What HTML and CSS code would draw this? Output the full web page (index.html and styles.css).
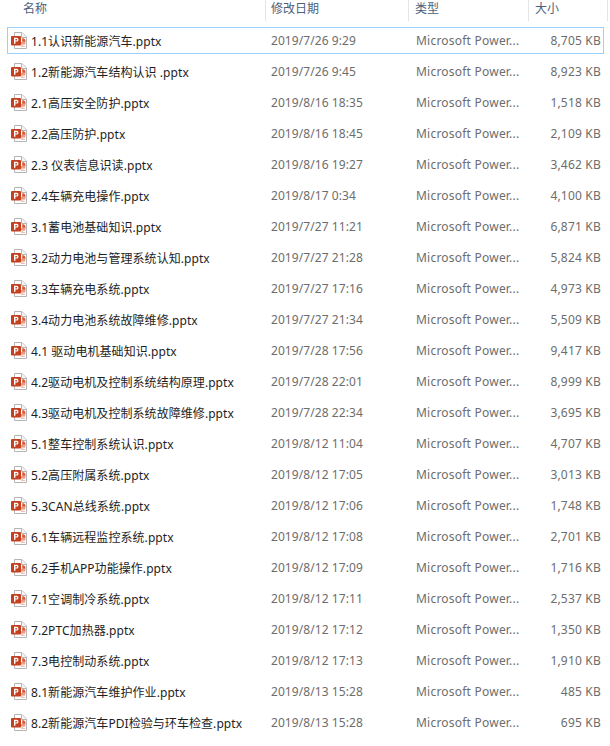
FILE: index.html
```html
<!DOCTYPE html>
<html lang="zh-CN">
  <head>
    <meta charset="UTF-8" />
    <title>文件列表</title>
    <link rel="stylesheet" href="styles.css">
  </head>

  <body>
    <svg class="icon-defs" width="0" height="0">
      <symbol id="ppt" viewBox="0 0 16 17">
        <path d="M3.5 .5H11L15.5 5V16.5H3.5Z" fill="#fff" stroke="#b4b4b4" />
        <path d="M10.5 .5V5.5H15.5" fill="#f4f4f4" stroke="#b4b4b4" />
        <path d="M11 6.5A3.5 3.5 0 1 1 7.5 10H11Z" fill="#eb9a82" />
        <path d="M11.5 6A3.5 3.5 0 0 1 14.5 9.5H11.5Z" fill="#d9583a" />
        <path d="M10 12H14V13H10ZM10 14H14V15H10Z" fill="#eec0b2" />
        <rect x="0" y="4" width="10" height="9.5" rx="1" fill="#c5401f" />
        <path d="M3 5.8H5.7Q7.5 5.8 7.5 7.7T5.7 9.6H4.4V11.8H3ZM4.4 6.9V8.5H5.4Q6.1 8.5 6.1 7.7T5.4 6.9Z" fill="#fff" />
      </symbol>
    </svg>

    <div class="header">
      <div class="head-cell head-name">名称</div>
      <div class="head-cell head-date">修改日期</div>
      <div class="head-cell head-type">类型</div>
      <div class="head-cell head-size">大小</div>
    </div>

    <div class="file-list">
      <div class="file-row selected">
        <div class="file-name"><svg class="file-icon"><use href="#ppt" /></svg>1.1认识新能源汽车.pptx</div>
        <div class="file-date">2019/7/26 9:29</div>
        <div class="file-type">Microsoft Power...</div>
        <div class="file-size">8,705 KB</div>
      </div>
      <div class="file-row">
        <div class="file-name"><svg class="file-icon"><use href="#ppt" /></svg>1.2新能源汽车结构认识 .pptx</div>
        <div class="file-date">2019/7/26 9:45</div>
        <div class="file-type">Microsoft Power...</div>
        <div class="file-size">8,923 KB</div>
      </div>
      <div class="file-row">
        <div class="file-name"><svg class="file-icon"><use href="#ppt" /></svg>2.1高压安全防护.pptx</div>
        <div class="file-date">2019/8/16 18:35</div>
        <div class="file-type">Microsoft Power...</div>
        <div class="file-size">1,518 KB</div>
      </div>
      <div class="file-row">
        <div class="file-name"><svg class="file-icon"><use href="#ppt" /></svg>2.2高压防护.pptx</div>
        <div class="file-date">2019/8/16 18:45</div>
        <div class="file-type">Microsoft Power...</div>
        <div class="file-size">2,109 KB</div>
      </div>
      <div class="file-row">
        <div class="file-name"><svg class="file-icon"><use href="#ppt" /></svg>2.3 仪表信息识读.pptx</div>
        <div class="file-date">2019/8/16 19:27</div>
        <div class="file-type">Microsoft Power...</div>
        <div class="file-size">3,462 KB</div>
      </div>
      <div class="file-row">
        <div class="file-name"><svg class="file-icon"><use href="#ppt" /></svg>2.4车辆充电操作.pptx</div>
        <div class="file-date">2019/8/17 0:34</div>
        <div class="file-type">Microsoft Power...</div>
        <div class="file-size">4,100 KB</div>
      </div>
      <div class="file-row">
        <div class="file-name"><svg class="file-icon"><use href="#ppt" /></svg>3.1蓄电池基础知识.pptx</div>
        <div class="file-date">2019/7/27 11:21</div>
        <div class="file-type">Microsoft Power...</div>
        <div class="file-size">6,871 KB</div>
      </div>
      <div class="file-row">
        <div class="file-name"><svg class="file-icon"><use href="#ppt" /></svg>3.2动力电池与管理系统认知.pptx</div>
        <div class="file-date">2019/7/27 21:28</div>
        <div class="file-type">Microsoft Power...</div>
        <div class="file-size">5,824 KB</div>
      </div>
      <div class="file-row">
        <div class="file-name"><svg class="file-icon"><use href="#ppt" /></svg>3.3车辆充电系统.pptx</div>
        <div class="file-date">2019/7/27 17:16</div>
        <div class="file-type">Microsoft Power...</div>
        <div class="file-size">4,973 KB</div>
      </div>
      <div class="file-row">
        <div class="file-name"><svg class="file-icon"><use href="#ppt" /></svg>3.4动力电池系统故障维修.pptx</div>
        <div class="file-date">2019/7/27 21:34</div>
        <div class="file-type">Microsoft Power...</div>
        <div class="file-size">5,509 KB</div>
      </div>
      <div class="file-row">
        <div class="file-name"><svg class="file-icon"><use href="#ppt" /></svg>4.1 驱动电机基础知识.pptx</div>
        <div class="file-date">2019/7/28 17:56</div>
        <div class="file-type">Microsoft Power...</div>
        <div class="file-size">9,417 KB</div>
      </div>
      <div class="file-row">
        <div class="file-name"><svg class="file-icon"><use href="#ppt" /></svg>4.2驱动电机及控制系统结构原理.pptx</div>
        <div class="file-date">2019/7/28 22:01</div>
        <div class="file-type">Microsoft Power...</div>
        <div class="file-size">8,999 KB</div>
      </div>
      <div class="file-row">
        <div class="file-name"><svg class="file-icon"><use href="#ppt" /></svg>4.3驱动电机及控制系统故障维修.pptx</div>
        <div class="file-date">2019/7/28 22:34</div>
        <div class="file-type">Microsoft Power...</div>
        <div class="file-size">3,695 KB</div>
      </div>
      <div class="file-row">
        <div class="file-name"><svg class="file-icon"><use href="#ppt" /></svg>5.1整车控制系统认识.pptx</div>
        <div class="file-date">2019/8/12 11:04</div>
        <div class="file-type">Microsoft Power...</div>
        <div class="file-size">4,707 KB</div>
      </div>
      <div class="file-row">
        <div class="file-name"><svg class="file-icon"><use href="#ppt" /></svg>5.2高压附属系统.pptx</div>
        <div class="file-date">2019/8/12 17:05</div>
        <div class="file-type">Microsoft Power...</div>
        <div class="file-size">3,013 KB</div>
      </div>
      <div class="file-row">
        <div class="file-name"><svg class="file-icon"><use href="#ppt" /></svg>5.3CAN总线系统.pptx</div>
        <div class="file-date">2019/8/12 17:06</div>
        <div class="file-type">Microsoft Power...</div>
        <div class="file-size">1,748 KB</div>
      </div>
      <div class="file-row">
        <div class="file-name"><svg class="file-icon"><use href="#ppt" /></svg>6.1车辆远程监控系统.pptx</div>
        <div class="file-date">2019/8/12 17:08</div>
        <div class="file-type">Microsoft Power...</div>
        <div class="file-size">2,701 KB</div>
      </div>
      <div class="file-row">
        <div class="file-name"><svg class="file-icon"><use href="#ppt" /></svg>6.2手机APP功能操作.pptx</div>
        <div class="file-date">2019/8/12 17:09</div>
        <div class="file-type">Microsoft Power...</div>
        <div class="file-size">1,716 KB</div>
      </div>
      <div class="file-row">
        <div class="file-name"><svg class="file-icon"><use href="#ppt" /></svg>7.1空调制冷系统.pptx</div>
        <div class="file-date">2019/8/12 17:11</div>
        <div class="file-type">Microsoft Power...</div>
        <div class="file-size">2,537 KB</div>
      </div>
      <div class="file-row">
        <div class="file-name"><svg class="file-icon"><use href="#ppt" /></svg>7.2PTC加热器.pptx</div>
        <div class="file-date">2019/8/12 17:12</div>
        <div class="file-type">Microsoft Power...</div>
        <div class="file-size">1,350 KB</div>
      </div>
      <div class="file-row">
        <div class="file-name"><svg class="file-icon"><use href="#ppt" /></svg>7.3电控制动系统.pptx</div>
        <div class="file-date">2019/8/12 17:13</div>
        <div class="file-type">Microsoft Power...</div>
        <div class="file-size">1,910 KB</div>
      </div>
      <div class="file-row">
        <div class="file-name"><svg class="file-icon"><use href="#ppt" /></svg>8.1新能源汽车维护作业.pptx</div>
        <div class="file-date">2019/8/13 15:28</div>
        <div class="file-type">Microsoft Power...</div>
        <div class="file-size">485 KB</div>
      </div>
      <div class="file-row">
        <div class="file-name"><svg class="file-icon"><use href="#ppt" /></svg>8.2新能源汽车PDI检验与环车检查.pptx</div>
        <div class="file-date">2019/8/13 15:28</div>
        <div class="file-type">Microsoft Power...</div>
        <div class="file-size">695 KB</div>
      </div>
    </div>
  </body>
</html>
```

FILE: styles.css
```css
body {
  margin: 0;
  background-color: #fff;
  font-family: "Noto Sans", "Noto Sans CJK SC", sans-serif;
  font-size: 12px;
  overflow: hidden;
}

.icon-defs {
  display: block;
  height: 0;
}

.header {
  display: flex;
  height: 21px;
  color: #4c607a;
}

.head-cell {
  box-sizing: border-box;
  padding-top: 1px;
  line-height: 15px;
  border-right: 1px solid #e5e5e5;
}

.head-name {
  width: 266px;
  padding-left: 23px;
}

.head-date {
  width: 143px;
  padding-left: 5px;
}

.head-type {
  width: 120px;
  padding-left: 6px;
}

.head-size {
  width: 79px;
  padding-left: 6px;
}

.file-list {
  display: flex;
  flex-direction: column;
  gap: 4px;
  margin: 6px 6px 0 7px;
}

.file-row {
  box-sizing: border-box;
  display: flex;
  align-items: center;
  height: 27px;
  border: 1px solid transparent;
  color: #6d6d6d;
}

.file-row.selected {
  border-color: #99d1ff;
}

.file-name {
  display: flex;
  align-items: center;
  width: 263px;
  color: #1e1e1e;
  letter-spacing: 0.06px;
  white-space: pre;
}

.file-icon {
  width: 16px;
  height: 17px;
  margin: 0 4px 0 3px;
  flex-shrink: 0;
}

.file-date {
  width: 145px;
  letter-spacing: 0.07px;
}

.file-type {
  width: 109px;
  letter-spacing: 0.22px;
}

.file-size {
  width: 76px;
  text-align: right;
  letter-spacing: 0.2px;
}
```
